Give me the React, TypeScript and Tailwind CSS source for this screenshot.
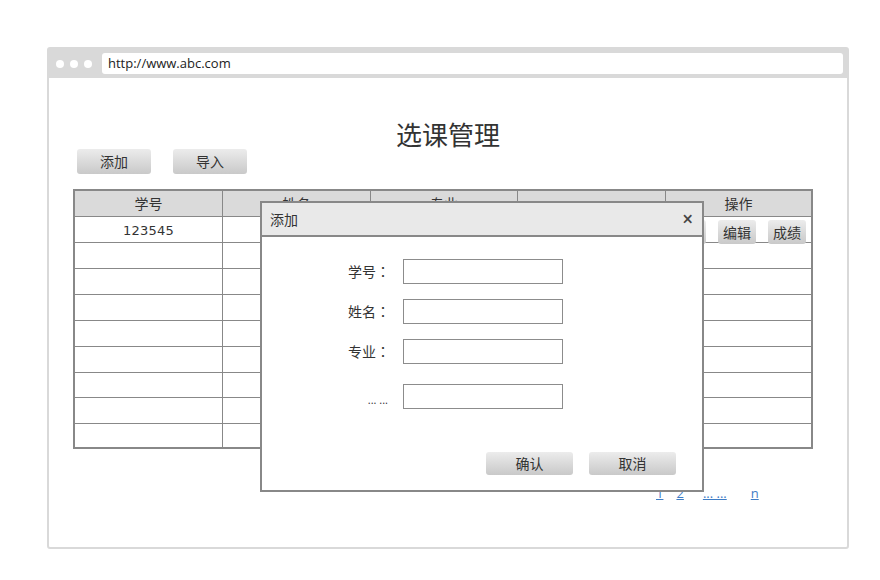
import React from 'react';

const font = "font-['Open_Sans','Noto_Sans_CJK_SC',sans-serif]";

function GrayButton({ label, className = '' }: { label: string; className?: string }) {
  return (
    <div
      className={`flex items-center justify-center rounded-[3px] bg-linear-to-b from-[#ececec] to-[#c9c9c9] text-[14px] text-[#333] ${className}`}
    >
      {label}
    </div>
  );
}

const headers = ['学号', '姓名', '专业', '', '操作'];
// content heights of the body rows
const rowHeights = [25, 25, 25, 25, 25, 25, 24, 25, 23];

function Table() {
  return (
    <div className="ml-[24px] w-[740px] border-2 border-[#888]">
      {/* header */}
      <div className="grid h-[26px] grid-cols-[148px_148px_147px_148px_1fr] border-b border-[#888] bg-[#dadada]">
        {headers.map((h, i) => (
          <div
            key={i}
            className={`flex items-center justify-center text-[14px] text-[#333] ${i < 4 ? 'border-r border-[#888]' : ''}`}
          >
            {h}
          </div>
        ))}
      </div>
      {/* body */}
      {rowHeights.map((h, r) => (
        <div
          key={r}
          className={`grid grid-cols-[148px_148px_147px_148px_1fr] ${r < rowHeights.length - 1 ? 'border-b border-[#888]' : ''}`}
          style={{ height: r < rowHeights.length - 1 ? h + 1 : h }}
        >
          {[0, 1, 2, 3, 4].map((c) => (
            <div
              key={c}
              className={`flex items-center ${c < 4 ? 'border-r border-[#888]' : ''} ${c === 0 ? 'justify-center' : ''}`}
            >
              {r === 0 && c === 0 && (
                <span className="font-['DejaVu_Sans',sans-serif] text-[13px] tracking-[0.2px] text-[#333]">123545</span>
              )}
              {r === 0 && c === 4 && (
                <div className="flex gap-[12px] pl-[2px] pt-[3px]">
                  <GrayButton label="删除" className="h-[24px] w-[38px]" />
                  <GrayButton label="编辑" className="h-[24px] w-[38px]" />
                  <GrayButton label="成绩" className="h-[24px] w-[38px]" />
                </div>
              )}
            </div>
          ))}
        </div>
      ))}
    </div>
  );
}

function FormRow({ label, small = false, className = '' }: { label: string; small?: boolean; className?: string }) {
  return (
    <div className={`flex ${className}`}>
      <div
        className={`w-[128px] text-right text-[#333] ${small ? 'self-end pr-[2px] text-[11px] leading-[18px]' : 'self-center text-[14px]'}`}
      >
        {small ? (
          label
        ) : (
          <>
            {label}
            <span className="font-['Noto_Sans_CJK_JP',sans-serif]">：</span>
          </>
        )}
      </div>
      <div className="ml-[13px] h-[25px] w-[160px] border border-[#8c8c8c] bg-white" />
    </div>
  );
}

function AddDialog() {
  return (
    <div className="absolute left-[211px] top-[152px] flex h-[291px] w-[444px] flex-col border-2 border-[#888] bg-white">
      <div className="flex h-[34px] items-center justify-between border-b-2 border-[#888] bg-[#e9e9e9] pl-[8px] pr-[9px]">
        <span className="text-[14px] text-[#333]">添加</span>
        <span className="text-[19px] font-semibold leading-none text-[#444]">×</span>
      </div>
      <div className="flex flex-col pt-[22px]">
        <FormRow label="学号" />
        <FormRow label="姓名" className="mt-[15px]" />
        <FormRow label="专业" className="mt-[15px]" />
        <FormRow label="... ..." small className="mt-[20px]" />
      </div>
      <div className="mt-[43px] flex justify-end gap-[16px] pr-[26px]">
        <GrayButton label="确认" className="h-[23px] w-[87px]" />
        <GrayButton label="取消" className="h-[23px] w-[87px]" />
      </div>
    </div>
  );
}

export default function App() {
  return (
    <div className={`h-[580px] w-[880px] bg-white pl-[47px] pt-[47px] ${font}`}>
      <div className="relative h-[502px] w-[802px] rounded-[3px] border-2 border-[#d9d9d9]">
        {/* browser bar */}
        <div className="flex h-[29px] items-center bg-[#d9d9d9] pl-[7px] pr-[4px]">
          <div className="flex gap-[6px]">
            <div className="h-[8px] w-[8px] rounded-full bg-white" />
            <div className="h-[8px] w-[8px] rounded-full bg-white" />
            <div className="h-[8px] w-[8px] rounded-full bg-white" />
          </div>
          <div className="ml-[10px] flex h-[21px] flex-1 items-center rounded-[3px] bg-white pl-[6px] text-[13px] text-[#222]">
            http://www.abc.com
          </div>
        </div>

        {/* page */}
        <h1 className="mt-[44px] text-center text-[26px] leading-[26px] text-[#333]">选课管理</h1>
        <div className="ml-[28px] mt-[1px] flex gap-[22px]">
          <GrayButton label="添加" className="h-[25px] w-[74px]" />
          <GrayButton label="导入" className="h-[25px] w-[74px]" />
        </div>
        <div className="mt-[15px]">
          <Table />
        </div>
        <div className="mt-[35px] flex pl-[607px] text-[13px] text-[#3f7dc6]">
          <span className="underline">1</span>
          <span className="ml-[13px] underline">2</span>
          <span className="ml-[19px] underline">... ...</span>
          <span className="ml-[24px] underline">n</span>
        </div>

        <AddDialog />
      </div>
    </div>
  );
}
